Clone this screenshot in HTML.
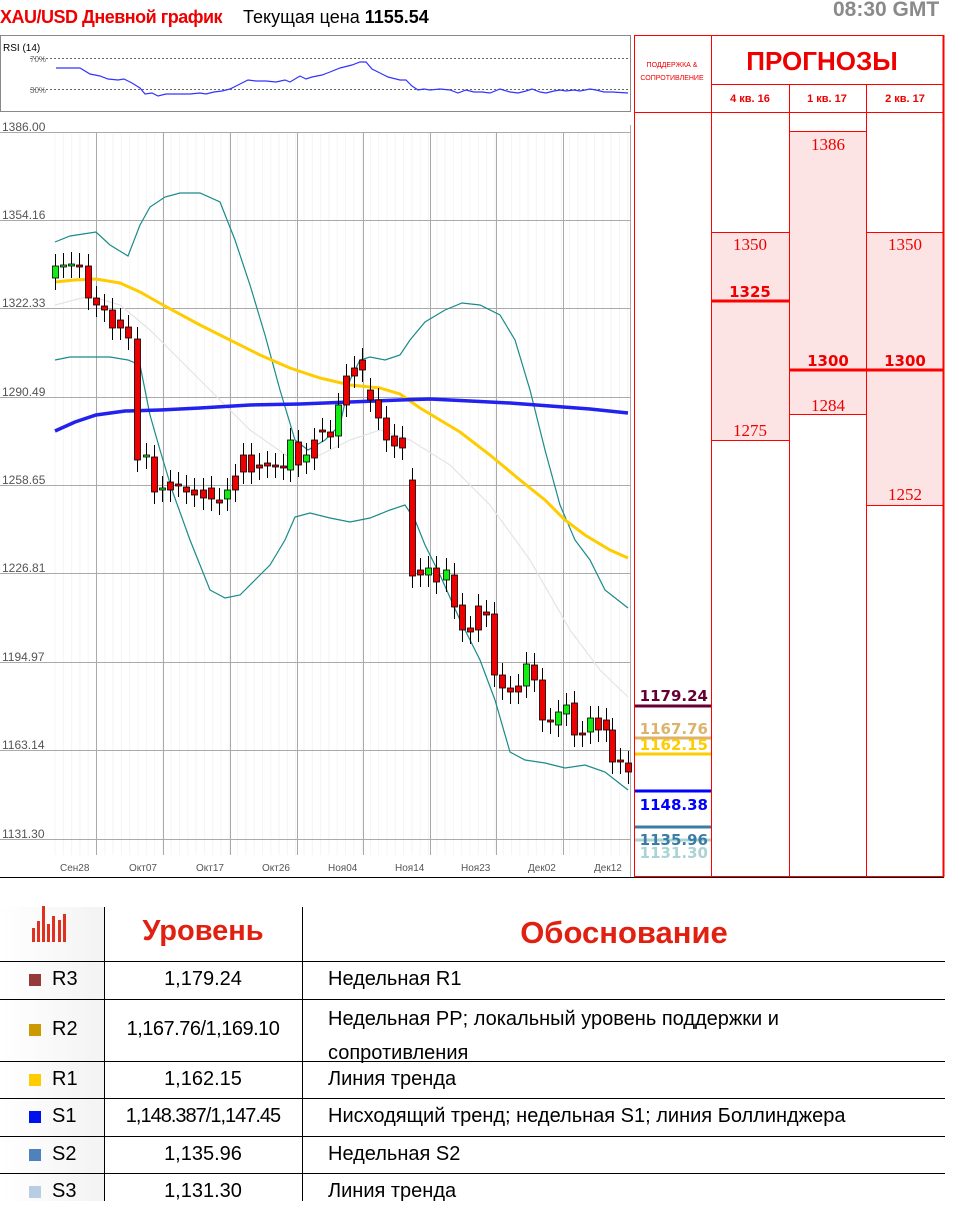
<!DOCTYPE html>
<html><head><meta charset="utf-8"><style>
*{margin:0;padding:0;box-sizing:border-box}
body{width:957px;height:1209px;background:#fff;position:relative;overflow:hidden;font-family:"Liberation Sans",sans-serif}
.a{position:absolute}
.t{font-family:"Liberation Sans Narrow","Liberation Sans",sans-serif}
</style></head><body>
<div class="a t" style="left:0;top:7px;font-size:18px;font-weight:bold;color:#e00;letter-spacing:-0.5px">XAU/USD Дневной график</div>
<div class="a t" style="left:243px;top:7px;font-size:18px;color:#000">Текущая цена <b>1155.54</b></div>
<div class="a t" style="left:833px;top:-2px;font-size:21px;font-weight:bold;color:#8a8a8a">08:30 GMT</div>

<svg class="a" style="left:0;top:0" width="957" height="880">
<rect x="0.5" y="35.5" width="630" height="76" fill="#fff" stroke="#888"/>
<text x="3" y="51" font-size="10" font-family="Liberation Sans Narrow,Liberation Sans,sans-serif">RSI (14)</text>
<line x1="30" y1="58.5" x2="628" y2="58.5" stroke="#666" stroke-dasharray="2,2"/>
<line x1="30" y1="89.5" x2="628" y2="89.5" stroke="#666" stroke-dasharray="2,2"/>
<text x="30" y="62" font-size="8" fill="#666">70%</text>
<text x="30" y="93" font-size="8" fill="#666">30%</text>
<polyline fill="none" stroke="#33f" stroke-width="1.2" points="56,68 80,68 90,74 100,76 108,79 118,80 124,79 132,83 140,88 145,94 152,93 158,96 166,94 172,94 180,94 190,94 200,93 206,94 214,92 222,91 230,89 240,84 248,80 256,81 266,81 276,82 285,80 290,82 300,76 306,79 312,77 322,75 330,72 340,68 352,65 360,62 366,62 372,69 380,73 388,77 392,78 400,80 406,80 412,86 418,90 424,89 430,90 440,89 450,90 458,93 466,90 474,92 482,92 490,93 500,89 510,92 518,93 526,91 532,89 540,92 546,93 554,91 560,90 566,91 574,90 580,91 590,89 596,90 604,92 612,92 628,93"/>
<rect x="0.5" y="125" width="630" height="752" fill="#fff"/>
<g id="minor" stroke="#f4f4f4"></g>
<g stroke="#aaa" stroke-width="1">
<line x1="0" y1="132.5" x2="630" y2="132.5"/><line x1="0" y1="220.5" x2="630" y2="220.5"/><line x1="0" y1="308.5" x2="630" y2="308.5"/><line x1="0" y1="397.5" x2="630" y2="397.5"/><line x1="0" y1="485.5" x2="630" y2="485.5"/><line x1="0" y1="573.5" x2="630" y2="573.5"/><line x1="0" y1="662.5" x2="630" y2="662.5"/><line x1="0" y1="750.5" x2="630" y2="750.5"/><line x1="0" y1="839.5" x2="630" y2="839.5"/>
<line x1="96.5" y1="132" x2="96.5" y2="855"/><line x1="163.5" y1="132" x2="163.5" y2="855"/><line x1="230.5" y1="132" x2="230.5" y2="855"/><line x1="297.5" y1="132" x2="297.5" y2="855"/><line x1="363.5" y1="132" x2="363.5" y2="855"/><line x1="430.5" y1="132" x2="430.5" y2="855"/><line x1="496.5" y1="132" x2="496.5" y2="855"/><line x1="563.5" y1="132" x2="563.5" y2="855"/><line x1="630.5" y1="125" x2="630.5" y2="877"/>
</g>
<g font-size="12" fill="#555" font-family="Liberation Sans Narrow,Liberation Sans,sans-serif">
<text x="2" y="131">1386.00</text><text x="2" y="219">1354.16</text><text x="2" y="307">1322.33</text><text x="2" y="396">1290.49</text><text x="2" y="484">1258.65</text><text x="2" y="572">1226.81</text><text x="2" y="661">1194.97</text><text x="2" y="749">1163.14</text><text x="2" y="838">1131.30</text>
</g>
<g font-size="10" fill="#555" font-family="Liberation Sans Narrow,Liberation Sans,sans-serif">
<text x="60" y="871">Сен28</text><text x="129" y="871">Окт07</text><text x="196" y="871">Окт17</text><text x="262" y="871">Окт26</text><text x="328" y="871">Ноя04</text><text x="395" y="871">Ноя14</text><text x="461" y="871">Ноя23</text><text x="528" y="871">Дек02</text><text x="594" y="871">Дек12</text>
</g>
<polyline fill="none" stroke="#e4e4e4" stroke-width="1.2" points="55,305 90,296 120,305 150,330 200,380 250,430 290,458 320,455 350,440 380,430 410,440 450,465 490,505 530,560 570,630 600,670 628,697"/>
<polyline fill="none" stroke="#1a8a8a" stroke-width="1.2" points="55,242 70,236 96,232 110,245 128,256 140,225 150,207 165,197 180,193 200,193 220,202 235,240 250,285 265,335 280,390 295,440 308,450 325,440 340,425 350,380 360,360 370,357 385,360 400,355 410,340 425,322 445,310 462,303 480,305 500,315 515,340 530,390 545,450 560,505 575,540 590,560 605,590 628,608"/>
<polyline fill="none" stroke="#1a8a8a" stroke-width="1.2" points="55,360 70,357 96,357 110,357 128,360 140,365 150,415 160,450 172,490 190,540 210,590 225,598 240,595 255,580 270,565 285,540 295,517 310,513 330,518 350,522 370,518 390,510 405,505 415,520 425,545 440,575 460,620 480,660 495,700 510,752 525,760 545,763 565,768 585,765 605,772 628,790"/>
<polyline fill="none" stroke="#fc0" stroke-width="3" points="55,282 75,280 96,279 120,283 140,292 163,305 200,325 230,340 260,355 290,368 320,378 350,385 380,388 400,394 420,408 440,420 460,432 490,455 520,480 545,500 565,520 585,535 610,550 628,558"/>
<polyline fill="none" stroke="#22e" stroke-width="3.5" points="55,431 75,422 96,415 125,411 160,410 200,408 250,405 300,404 350,402 400,400 430,399 470,401 510,403 550,406 590,409 628,413"/>
<g id="candles"></g>
<rect x="789" y="131" width="77" height="283" fill="#fde4e4"/>
<rect x="711" y="232" width="78" height="208" fill="#fde4e4"/>
<rect x="866" y="232" width="77" height="273" fill="#fde4e4"/>
<g stroke="#f00" stroke-width="1">
<rect x="634.5" y="35.5" width="309" height="841" fill="none"/>
<line x1="943.5" y1="35" x2="943.5" y2="877" stroke-width="2"/>
<line x1="711.5" y1="35" x2="711.5" y2="877"/>
<line x1="789.5" y1="84" x2="789.5" y2="877"/>
<line x1="866.5" y1="84" x2="866.5" y2="877"/>
<line x1="711" y1="84.5" x2="944" y2="84.5"/>
<line x1="634" y1="112.5" x2="944" y2="112.5"/>
<line x1="789" y1="131.5" x2="866" y2="131.5"/>
<line x1="711" y1="232.5" x2="789" y2="232.5"/><line x1="866" y1="232.5" x2="944" y2="232.5"/>
<line x1="711" y1="440.5" x2="789" y2="440.5"/><line x1="789" y1="414.5" x2="866" y2="414.5"/><line x1="866" y1="505.5" x2="944" y2="505.5"/>
<line x1="711" y1="301" x2="789" y2="301" stroke-width="3"/>
<line x1="789" y1="370" x2="944" y2="370" stroke-width="3"/>
</g>
<text x="672" y="67" font-size="7" fill="#e00" text-anchor="middle" font-family="Liberation Sans Narrow,Liberation Sans,sans-serif">ПОДДЕРЖКА &amp;</text>
<text x="672" y="80" font-size="7" fill="#e00" text-anchor="middle" font-family="Liberation Sans Narrow,Liberation Sans,sans-serif">СОПРОТИВЛЕНИЕ</text>
<text x="822" y="70" font-size="26" fill="#e00" font-weight="bold" text-anchor="middle" font-family="Liberation Sans Narrow,Liberation Sans,sans-serif">ПРОГНОЗЫ</text>
<g font-size="11" fill="#e00" font-weight="bold" text-anchor="middle" font-family="Liberation Sans Narrow,Liberation Sans,sans-serif">
<text x="750" y="102">4 кв. 16</text><text x="827" y="102">1 кв. 17</text><text x="905" y="102">2 кв. 17</text></g>
<g font-size="17" fill="#e00" text-anchor="middle" font-family="Liberation Serif,serif">
<text x="828" y="150">1386</text><text x="750" y="250">1350</text><text x="905" y="250">1350</text>
<text x="750" y="297" font-weight="bold" font-family="DejaVu Sans" font-size="15">1325</text>
<text x="828" y="366" font-weight="bold" font-family="DejaVu Sans" font-size="15">1300</text>
<text x="905" y="366" font-weight="bold" font-family="DejaVu Sans" font-size="15">1300</text>
<text x="828" y="411">1284</text><text x="750" y="436">1275</text><text x="905" y="500">1252</text></g>
<g stroke-width="3">
<line x1="635" y1="706" x2="711" y2="706" stroke="#603"/>
<line x1="635" y1="738" x2="711" y2="738" stroke="#dcb36a"/>
<line x1="635" y1="754" x2="711" y2="754" stroke="#fc0"/>
<line x1="635" y1="791" x2="711" y2="791" stroke="#00f"/>
<line x1="635" y1="827" x2="711" y2="827" stroke="#3a7ca5"/>
<line x1="635" y1="840" x2="711" y2="840" stroke="#acd3d3"/></g>
<g font-size="15" font-weight="bold" text-anchor="end" font-family="DejaVu Sans,sans-serif">
<text x="708" y="701" fill="#603">1179.24</text><text x="708" y="734" fill="#dcb36a">1167.76</text><text x="708" y="750" fill="#fc0">1162.15</text><text x="708" y="810" fill="#00f">1148.38</text><text x="708" y="845" fill="#3a7ca5">1135.96</text><text x="708" y="858" fill="#acd3d3">1131.30</text></g>
<line x1="0" y1="877.5" x2="944" y2="877.5" stroke="#000"/>
</svg>

<div class="a" style="left:0;top:907px;width:104px;height:300px;background:linear-gradient(90deg,#fff,#f3f3f3)"></div>
<svg class="a" style="left:32px;top:906px" width="38" height="36"><g fill="#e03020">
<rect x="0" y="22" width="3" height="14"/><rect x="5" y="15" width="3" height="21"/><rect x="10" y="0" width="3" height="36"/><rect x="15" y="18" width="3" height="18"/><rect x="20" y="10" width="3" height="26"/><rect x="26" y="14" width="3" height="22"/><rect x="31" y="8" width="3" height="28"/></g></svg>
<div class="a" style="left:104px;top:907px;width:1px;height:300px;background:#000"></div>
<div class="a" style="left:302px;top:907px;width:1px;height:300px;background:#000"></div>
<div class="a" style="left:104px;top:915px;width:198px;text-align:center;font-size:29px;font-weight:bold;color:#e02010">Уровень</div>
<div class="a" style="left:303px;top:915px;width:642px;text-align:center;font-size:31px;font-weight:bold;color:#e02010">Обоснование</div>
<div class="a" style="left:0;top:961px;width:945px;height:1px;background:#000"></div>
<div class="a" style="left:0;top:999px;width:945px;height:1px;background:#000"></div>
<div class="a" style="left:0;top:1061px;width:945px;height:1px;background:#000"></div>
<div class="a" style="left:0;top:1098px;width:945px;height:1px;background:#000"></div>
<div class="a" style="left:0;top:1136px;width:945px;height:1px;background:#000"></div>
<div class="a" style="left:0;top:1173px;width:945px;height:1px;background:#000"></div>
<div style="font-size:20px;color:#000">
<div class="a" style="left:29px;top:974px;width:12px;height:12px;background:#943a3a"></div><div class="a" style="left:52px;top:968px">R3</div><div class="a" style="left:104px;top:968px;width:198px;text-align:center">1,179.24</div><div class="a" style="left:328px;top:968px">Недельная R1</div>
<div class="a" style="left:29px;top:1024px;width:12px;height:12px;background:#cc9900"></div><div class="a" style="left:52px;top:1018px">R2</div><div class="a" style="left:104px;top:1018px;width:198px;text-align:center;letter-spacing:-0.5px">1,167.76/1,169.10</div><div class="a" style="left:328px;top:1002px;line-height:34px">Недельная PP; локальный уровень поддержки и<br>сопротивления</div>
<div class="a" style="left:29px;top:1074px;width:12px;height:12px;background:#ffcc00"></div><div class="a" style="left:52px;top:1068px">R1</div><div class="a" style="left:104px;top:1068px;width:198px;text-align:center">1,162.15</div><div class="a" style="left:328px;top:1068px">Линия тренда</div>
<div class="a" style="left:29px;top:1111px;width:12px;height:12px;background:#0011ee"></div><div class="a" style="left:52px;top:1105px">S1</div><div class="a" style="left:104px;top:1105px;width:198px;text-align:center;letter-spacing:-1px">1,148.387/1,147.45</div><div class="a" style="left:328px;top:1105px">Нисходящий тренд; недельная S1; линия Боллинджера</div>
<div class="a" style="left:29px;top:1149px;width:12px;height:12px;background:#4f81bd"></div><div class="a" style="left:52px;top:1143px">S2</div><div class="a" style="left:104px;top:1143px;width:198px;text-align:center">1,135.96</div><div class="a" style="left:328px;top:1143px">Недельная S2</div>
<div class="a" style="left:29px;top:1186px;width:12px;height:12px;background:#b8cce4"></div><div class="a" style="left:52px;top:1180px">S3</div><div class="a" style="left:104px;top:1180px;width:198px;text-align:center">1,131.30</div><div class="a" style="left:328px;top:1180px">Линия тренда</div>
</div>
<div class="a" style="left:0;top:1201px;width:957px;height:8px;background:#fff"></div>
<script>
var c=[[55,278,266],[63,266,265],[71,266,264],[79,265,266],[88,266,298],[96,298,305],[104,306,310],[112,310,328],[120,320,328],[128,327,338],[137,339,460],[146,457,455],[154,457,492],[162,490,488],[170,482,490],[178,484,485],[186,487,492],[194,490,495],[203,490,498],[211,488,499],[219,500,503],[227,499,490],[235,476,490],[243,455,472],[251,455,472],[259,465,468],[267,463,466],[275,465,466],[283,466,468],[290,470,440],[298,442,465],[306,462,455],[314,440,458],[322,430,430],[330,432,437],[338,436,405],[346,376,405],[354,368,376],[362,360,370],[370,390,400],[378,400,418],[386,418,440],[394,436,446],[402,438,448],[412,480,576],[420,570,575],[428,575,568],[436,568,582],[446,580,570],[454,575,607],[462,605,630],[470,628,632],[478,606,630],[486,612,615],[494,614,675],[502,675,688],[510,688,692],[518,686,692],[526,686,664],[534,665,680],[542,680,720],[550,720,722],[558,725,712],[566,714,705],[574,703,735],[582,733,735],[590,732,718],[598,718,730],[606,720,730],[612,730,762],[620,760,762],[628,763,772]];
var s='';c.forEach(function(d){var x=d[0],o=d[1],cl=d[2],t=Math.min(o,cl),b=Math.max(o,cl);var up=cl<o;s+='<line x1="'+(x+.5)+'" y1="'+(t-12)+'" x2="'+(x+.5)+'" y2="'+(b+12)+'" stroke="#000"/>';s+='<rect x="'+(x-2.5)+'" y="'+t+'" width="6" height="'+Math.max(2,b-t)+'" fill="'+(up?'#1e1':'#e00')+'" stroke="#000" stroke-width=".8"/>';});
document.getElementById('candles').innerHTML=s;
var m='';for(var x=55;x<630;x+=8.3)m+='<line x1="'+x+'" y1="132" x2="'+x+'" y2="855"/>';document.getElementById('minor').innerHTML=m;
</script>
</body></html>
